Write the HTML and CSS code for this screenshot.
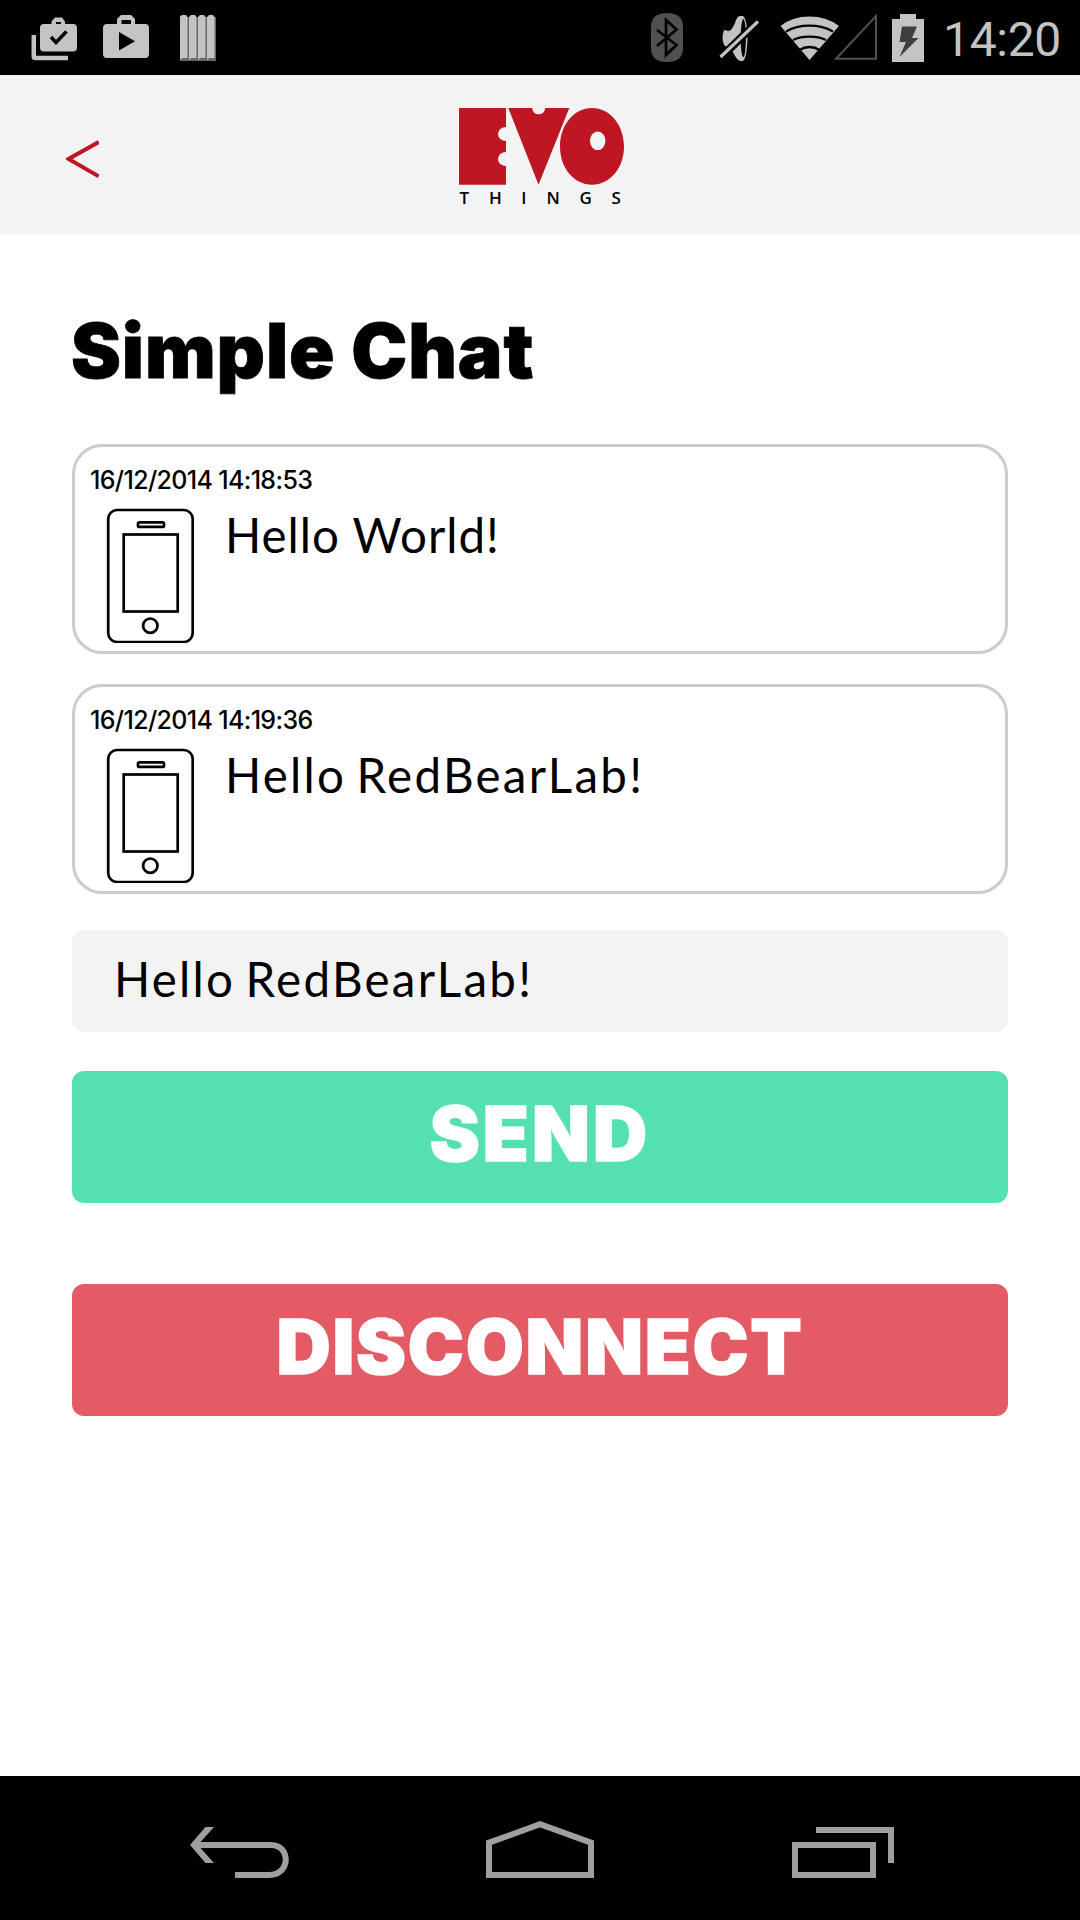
FILE: index.html
```html
<!DOCTYPE html>
<html lang="en">
<head>
<meta charset="utf-8">
<title>Simple Chat</title>
<link rel="stylesheet" href="styles.css">
</head>
<body>
<div class="screen">
  <div class="status-bar">
    <div class="status-group notifications">
      <svg width="46" height="44" viewBox="31 17 46 44"><path d="M33.8 35V56.5Q33.8 58 35.3 58H68" fill="none" stroke="#c3c3c3" stroke-width="4.5"/><path fill="#c3c3c3" fill-rule="evenodd" d="M40 28Q40 24 44 24H51.500V21.500L55 17.500H62L65 21.500V24H73Q77 24 77 28V47.500Q77 51.500 73 51.500H44Q40 51.500 40 47.500ZM56 24H61V22H56Z"/><path d="M51 37L56 42.500L66.500 31.500" fill="none" stroke="#000" stroke-width="3.500"/></svg>
      <svg width="46" height="43" viewBox="103 15 46 43"><path fill="#c3c3c3" fill-rule="evenodd" d="M103 28Q103 24 107 24H117V19L121 15H131L135 19V24H145Q149 24 149 28V54Q149 58 145 58H107Q103 58 103 54ZM121.500 24H131V20H121.500ZM119 32V50.500L135 41.300Z"/></svg>
      <svg class="barcode" width="36" height="46" viewBox="180 15 36 46"><path fill="#686868" d="M180 17H216V61H180Z"/><path fill="#c3c3c3" d="M180 16.500L182 15H186L187.500 17V58H182L180 60ZM189 17L191 15H195L196.500 17V58H191L189 60ZM198 17L200 15H204L205.500 17V58H200L198 60ZM207 17L209 15H213L214.500 17V58H209L207 60Z"/></svg>
    </div>
    <div class="status-group system">
      <svg class="bluetooth" width="32" height="49" viewBox="651 12 32 49"><path fill="#505050" d="M651 26Q651 12 667 12T683 26V47Q683 61 667 61T651 47Z"/><path d="M657 29L676.500 44L666 54V19L676.500 28.500L657 45" fill="none" stroke="#000" stroke-width="2.700"/></svg>
      <svg class="mute" width="40" height="46" viewBox="719 14 40 46"><path fill="#c3c3c3" d="M740 15H743Q747 18 747.500 37Q747 57 743 60H740Q736 58 733 51L724 44Q721 37 724 29L729 30Q732 29 735 22Q737 15 740 15Z"/><ellipse cx="743.300" cy="37" rx="2.600" ry="19" fill="#000"/><path d="M721 56L758 20.500" stroke="#000" stroke-width="8"/><path d="M720.500 56L758 20.500" stroke="#c3c3c3" stroke-width="3.200"/></svg>
      <svg class="wifi" width="59" height="44" viewBox="780 14 59 44"><path fill="#c3c3c3" d="M809.500 58L780.500 24Q792 14.500 809.500 14.500T839 24Z"/><path d="M786 29.500Q796 23.700 809.500 23.700T833 29.500M793 38Q800 34.700 809.500 34.700T826 38M799.500 48Q804 45 809.500 45T819.500 48" fill="none" stroke="#000" stroke-width="2.300"/></svg>
      <svg class="signal" width="44" height="48" viewBox="833 11 44 48"><path d="M836 57.800H876V15Z" fill="none" stroke="#505050" stroke-width="2"/></svg>
      <svg class="battery" width="32" height="48" viewBox="892 12 32 48"><path fill="#c3c3c3" d="M892 17H900V12H916V17H924V60H892Z"/><path fill="#3d3d3d" d="M902 24.500H917L912 36H918.500L899.500 55L906 40H899.500Z"/></svg>
      <span class="clock">14:20</span>
    </div>
  </div>

  <header class="header">
    <svg class="back" width="33" height="40" viewBox="66 139 33 40"><path d="M98.700 142L68.500 159L98.700 176.300" fill="none" stroke="#be1622" stroke-width="4"/></svg>
    <svg class="logo" width="166" height="110" viewBox="459 108 166 110">
      <g fill="#be1622"><path d="M459 108H506V127A8 7 0 0 0 506 141V152A8 7 0 0 0 506 166V184.700H459Z"/><path d="M508.300 108H532A6.800 8 0 0 0 545.300 108H569.300L538.500 184.700Z"/><path fill-rule="evenodd" d="M592 108C610 108 624 125 624 146.500S610 184.700 592 184.700S560 168 560 146.500S574 108 592 108ZM597.700 131.500A7.800 9.300 0 1 0 597.700 150.100A7.800 9.300 0 1 0 597.700 131.500Z"/></g>
      <g class="logo-text"><text x="459.500" y="203.700">T</text><text x="489" y="203.700">H</text><text x="521.300" y="203.700">I</text><text x="546.500" y="203.700">N</text><text x="579.500" y="203.700">G</text><text x="611.500" y="203.700">S</text></g>
    </svg>
  </header>

  <main class="content">
    <h1 class="title">Simple Chat</h1>
    <article class="message">
      <time class="date">16/12/2014 14:18:53</time>
      <div class="message-body">
        <svg class="phone" width="88" height="135" viewBox="106 508 88 135"><g fill="none" stroke="#000" stroke-width="2.700"><rect x="108.200" y="510" width="84.500" height="132" rx="9"/><rect x="138" y="522.400" width="26" height="4.500" rx="1.500"/><rect x="123.700" y="534.500" width="54" height="77"/><circle cx="150.300" cy="625.700" r="7.200"/></g></svg>
        <p class="text text-short">Hello World!</p>
      </div>
    </article>
    <article class="message">
      <time class="date">16/12/2014 14:19:36</time>
      <div class="message-body">
        <svg class="phone" width="88" height="135" viewBox="106 508 88 135"><g fill="none" stroke="#000" stroke-width="2.700"><rect x="108.200" y="510" width="84.500" height="132" rx="9"/><rect x="138" y="522.400" width="26" height="4.500" rx="1.500"/><rect x="123.700" y="534.500" width="54" height="77"/><circle cx="150.300" cy="625.700" r="7.200"/></g></svg>
        <p class="text">Hello RedBearLab!</p>
      </div>
    </article>
    <input class="field" type="text" value="Hello RedBearLab!" aria-label="Message">
    <button class="button send">SEND</button>
    <button class="button disconnect">DISCONNECT</button>
  </main>

  <nav class="nav-bar">
    <svg width="99" height="51" viewBox="190 1827 99 51"><path fill="#9f9f9f" d="M190 1845L205.500 1827H214L200.500 1842H271C295 1842 295 1878 269 1878H235V1872H269C287 1872 287 1848 271 1848H200.500L214 1863H205.500Z"/></svg>
    <svg class="home" width="108" height="57" viewBox="486 1821 108 57"><path fill="none" stroke="#9f9f9f" stroke-width="6" d="M489 1875V1842.700L540 1824.300L591 1842.700V1875Z"/></svg>
    <svg width="102" height="51" viewBox="792 1827 102 51"><path fill="none" stroke="#9f9f9f" stroke-width="6" d="M795 1845H873V1875H795ZM816 1830H891V1863"/></svg>
  </nav>
</div>
</body>
</html>
```
FILE: styles.css
```css
* { box-sizing: border-box; }

body {
  margin: 0;
  background: #fff;
  color: #000;
  font-family: Lato, "Open Sans", sans-serif;
}

svg { display: block; flex: none; }

.screen {
  display: flex;
  flex-direction: column;
  width: 1080px;
  height: 1920px;
  overflow: hidden;
}

.status-bar {
  display: flex;
  justify-content: space-between;
  height: 75px;
  padding: 0 19px 0 31px;
  background: #000;
}

.status-group { display: flex; align-items: center; }
.notifications { align-items: flex-start; gap: 26px; padding-top: 15px; }
.notifications svg:first-child { margin-top: 2px; }
.barcode { margin-left: 5px; }
.bluetooth { margin-right: 36px; }
.mute { margin-right: 21px; }
.wifi { margin-right: -6px; }
.signal { margin: 0 15px 4px 0; }
.battery { margin-right: 19px; }

.clock {
  width: 118px;
  color: #c3c3c3;
  font: 400 48px/75px Roboto, sans-serif;
  letter-spacing: -0.3px;
  padding-top: 3px;
}

.header {
  display: grid;
  grid-template-columns: 1fr auto 1fr;
  align-items: start;
  height: 159px;
  padding: 0 63px 0 66px;
  background: #f3f3f3;
}

.back { margin-top: 64px; }
.logo { margin: 33px 0 0 1px; }
.logo-text { font: 600 17px "Open Sans", sans-serif; }

.content {
  display: flex;
  flex-direction: column;
  flex: 1;
  padding: 0 72px;
}

.title {
  margin: 62px 0 38px;
  font: 900 75px/110px Inter, sans-serif;
  letter-spacing: 0.900px;
  text-indent: -1px;
  white-space: nowrap;
  -webkit-text-stroke: 0.800px #000;
}

.message {
  height: 210px;
  margin-bottom: 30px;
  padding: 15px 15px 0;
  border: 3px solid #ccc;
  border-radius: 30px;
}

.date {
  display: block;
  font: 500 25px/36px Inter, sans-serif;
  letter-spacing: -0.650px;
}

.message-body {
  display: flex;
  align-items: flex-start;
  gap: 31px;
  padding: 10px 0 0 16px;
}

.text {
  margin: 0;
  font-size: 47.500px;
  line-height: 54px;
  letter-spacing: 2.250px;
  word-spacing: -4px;
  white-space: nowrap;
}

.text-short { letter-spacing: 1px; word-spacing: 0; }

.field {
  display: block;
  width: 100%;
  height: 102px;
  margin: 6px 0 39px;
  padding: 0 42px 5px;
  border: 0;
  border-radius: 12px;
  background: #f3f3f3;
  color: #000;
  font: 400 47.500px Lato, sans-serif;
  letter-spacing: 2.250px;
  word-spacing: -4px;
}

.button {
  height: 132px;
  padding: 0 0 6px;
  border: 0;
  border-radius: 12px;
  color: #fff;
  font: 900 75px/126px Inter, sans-serif;
  letter-spacing: 1.800px;
  -webkit-text-stroke: 1.500px #fff;
}

.send { margin-bottom: 81px; background: #55e0b4; letter-spacing: 3.200px; }
.disconnect { background: #e25b65; }

.nav-bar {
  display: flex;
  align-items: flex-end;
  justify-content: space-between;
  height: 144px;
  padding: 0 186px 42px 190px;
  background: #000;
}

.home { margin: 0 1px 0 0; }
```
